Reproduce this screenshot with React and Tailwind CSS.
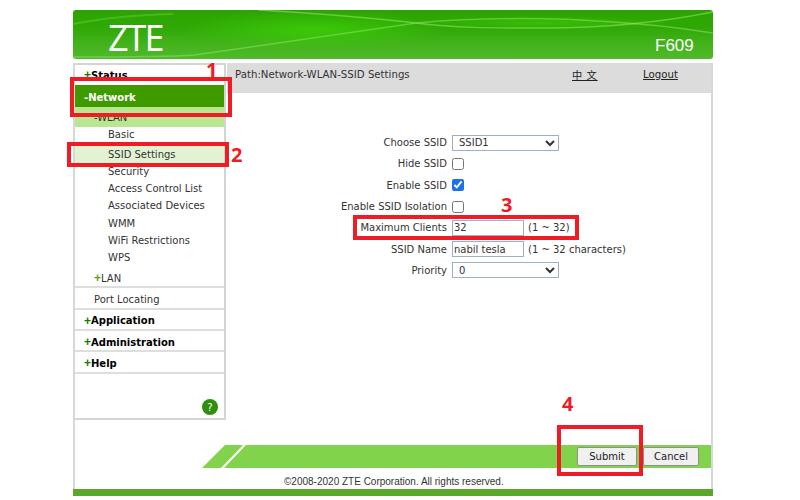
import { useState } from 'react';

const subItems = ['Security', 'Access Control List', 'Associated Devices', 'WMM', 'WiFi Restrictions', 'WPS'];

function Plus({ className }) {
    return <span className={`inline-block w-[7px] leading-none font-bold font-['Liberation_Sans',sans-serif] ${className}`}>+</span>;
}

function TopItem({ label }) {
    return (
        <div className="h-[21.4px] pl-[9px] pt-[3px] flex items-center border-b-2 border-[#dedede] font-bold text-[10px] text-black">
            <Plus className="text-[#0a7d0a] text-[12px]" />{label}
        </div>
    );
}

function SideMenu() {
    return (
        <aside className="w-[151px] h-[357px] flex flex-col border-t-2 border-r-2 border-b-2 border-[#d4d4d4] shrink-0">
            <div className="h-[20px] pl-[9px] flex items-center font-bold text-[10px] text-black">
                <Plus className="text-[#0a7d0a] text-[12px]" />Status
            </div>
            <div className="h-[22px] pl-[9px] pt-[3px] flex items-center bg-[#3f9a00] text-white font-bold text-[10px]">-Network</div>
            <div className="h-[20px] pl-[19px] flex items-center bg-[#b9e690] text-[10px] text-[#333]">-WLAN</div>
            <div className="h-[18px] pl-[33px] pb-[3px] flex items-center text-[10px] text-[#333]">Basic</div>
            <div className="h-[18px] pl-[33px] flex items-center bg-[#e2f3d3] text-[10px] text-[#333]">SSID Settings</div>
            {subItems.map((item) => (
                <div key={item} className="h-[17.2px] pl-[33px] flex items-center text-[10px] text-[#333]">{item}</div>
            ))}
            <div className="h-[22px] pl-[19px] pt-[4px] flex items-center border-b-2 border-[#dedede] text-[10px] text-[#333]">
                <Plus className="text-[#5f9e1e] text-[12px]" />LAN
            </div>
            <div className="h-[21.4px] pl-[19px] pt-[3px] flex items-center border-b-2 border-[#dedede] text-[10px] text-[#333]">Port Locating</div>
            <TopItem label="Application" />
            <TopItem label="Administration" />
            <TopItem label="Help" />
            <div className="flex-1 flex items-end justify-end pr-[6px] pb-[3px]">
                <div className="w-[16px] h-[16px] rounded-full bg-[#2f8f0c] text-white text-[10px] flex items-center justify-center">?</div>
            </div>
        </aside>
    );
}

function FormRow({ label, children }) {
    return (
        <div className="h-[21.3px] flex items-center">
            <div className="w-[225px] pr-[5px] text-right text-[10px] text-[#333]">{label}</div>
            {children}
        </div>
    );
}

function RedBox({ className }) {
    return <div className={`absolute border-[4px] border-[#ee1c25] pointer-events-none ${className}`} />;
}

function RedNum({ className, children }) {
    return <div className={`absolute font-['Open_Sans',sans-serif] font-bold text-[20px] leading-none text-[#ee1c25] ${className}`}>{children}</div>;
}

export default function App() {
    const [enabled, setEnabled] = useState(true);

    return (
        <div className="relative w-[800px] h-[500px] bg-white pt-[10px] pl-[73px] overflow-hidden font-['DejaVu_Sans',sans-serif]">
            <div className="w-[640px] flex flex-col">
                {/* Bandeau ZTE */}
                <header className="relative h-[49px] rounded-[3px] bg-[linear-gradient(180deg,#2ca400_0%,#2fa806_35%,#43b31c_70%,#4fba2a_100%)]">
                    <svg viewBox="0 0 640 49" className="absolute inset-0 w-full h-full rounded-[3px]" fill="none">
                        <defs>
                            <radialGradient id="glow">
                                <stop offset="0%" stopColor="#3ccc08" stopOpacity="0.9" />
                                <stop offset="100%" stopColor="#3ccc08" stopOpacity="0" />
                            </radialGradient>
                        </defs>
                        {/* zone claire le long des courbes */}
                        <ellipse cx="240" cy="20" rx="130" ry="20" fill="url(#glow)" />
                        <ellipse cx="470" cy="13" rx="130" ry="7" fill="url(#glow)" fillOpacity="0.7" />
                        <path d="M1 47 C60 47 90 47 122 45 C205 33 290 20 343 13 C400 8 470 7 540 12 C590 15 620 20 640 23" stroke="#8fe868" strokeOpacity="0.5" strokeWidth="1.5" />
                        <path d="M185 0 C240 3 290 7 343 13 C380 18 420 18 470 18 C530 18 590 12 640 2" stroke="#8fe868" strokeOpacity="0.55" strokeWidth="1.5" />
                        <path d="M0 14 C30 8 60 5 100 4" stroke="#6fd848" strokeOpacity="0.4" strokeWidth="2" />
                    </svg>
                    <span className="absolute left-[35px] top-[8px] font-['Open_Sans',sans-serif] font-medium tracking-[-2px] text-white text-[36px] leading-[40px]">ZTE</span>
                    <span className="absolute left-[582px] top-[26px] font-['Liberation_Sans',sans-serif] text-white text-[17px] leading-[20px]">F609</span>
                </header>

                <div className="mt-[4px] h-[426px] flex border-l-2 border-r-2 border-[#d8d8d8]">
                    <SideMenu />
                    <main className="flex-1 flex flex-col ml-[1px]">
                        <div className="h-[30px] shrink-0 bg-[#dcdcdc] flex pt-[4px] text-[10.2px] text-[#333]">
                            <span className="ml-[8px] w-[337px]">Path:Network-WLAN-SSID Settings</span>
                            <a className="w-[71px] underline text-[#222] tracking-[1px] font-['Noto_Sans_CJK_SC',sans-serif]">中 文</a>
                            <a className="underline text-[#222]">Logout</a>
                        </div>

                        <form className="pt-[39px] flex flex-col">
                            <FormRow label="Choose SSID">
                                <select className="w-[107px] h-[16px] border border-[#9db0c4] text-[10px] bg-white pl-[2px] text-[#333]" defaultValue="SSID1">
                                    <option>SSID1</option>
                                </select>
                            </FormRow>
                            <FormRow label="Hide SSID"><input type="checkbox" className="w-[12px] h-[12px]" /></FormRow>
                            <FormRow label="Enable SSID">
                                <input type="checkbox" className="w-[12px] h-[12px] accent-[#1a73e8]" checked={enabled} onChange={() => setEnabled(!enabled)} />
                            </FormRow>
                            <FormRow label="Enable SSID Isolation"><input type="checkbox" className="w-[12px] h-[12px]" /></FormRow>
                            <FormRow label="Maximum Clients">
                                <input className="w-[72px] h-[16px] border border-[#9db0c4] text-[10px] px-[1px] text-[#333]" defaultValue="32" />
                                <span className="ml-[4px] text-[10px] text-[#333]">(1 ~ 32)</span>
                            </FormRow>
                            <FormRow label="SSID Name">
                                <input className="w-[72px] h-[16px] border border-[#9db0c4] text-[10px] px-[1px] text-[#333]" defaultValue="nabil tesla" />
                                <span className="ml-[4px] text-[10px] text-[#333]">(1 ~ 32 characters)</span>
                            </FormRow>
                            <FormRow label="Priority">
                                <select className="w-[107px] h-[16px] border border-[#9db0c4] text-[10px] bg-white pl-[2px] text-[#333]" defaultValue="0">
                                    <option>0</option>
                                </select>
                            </FormRow>
                        </form>

                        <div className="mt-auto relative h-[23px] flex justify-end items-center gap-[6px] pr-[12px] mb-[21px]">
                            <svg viewBox="0 0 509 23" className="absolute left-[-25px] top-0 w-[509px] h-[23px]">
                                <polygon points="0,23 23,0 41,0 19,23" fill="#80d34a" />
                                <polygon points="22,23 44,0 509,0 509,23" fill="#80d34a" />
                            </svg>
                            <button type="button" className="relative w-[60px] h-[19px] bg-[#f0f0f0] border border-[#8f8f8f] rounded-[2px] text-[10px] text-[#222]">Submit</button>
                            <button type="button" className="relative w-[56px] h-[19px] bg-[#f0f0f0] border border-[#8f8f8f] rounded-[2px] text-[10px] text-[#222]">Cancel</button>
                        </div>
                    </main>
                </div>
                <div className="h-[7px] bg-[#5aa82a]" />
            </div>

            <div className="absolute left-[284px] top-[475px] font-['Liberation_Sans',sans-serif] text-[10px] leading-[13px] text-[#333] whitespace-nowrap">©2008-2020 ZTE Corporation. All rights reserved.</div>

            {/* Annotations rouges */}
            <RedBox className="left-[70px] top-[77px] w-[162px] h-[40px]" />
            <RedBox className="left-[67px] top-[142px] w-[162px] h-[25px]" />
            <RedBox className="left-[353px] top-[215px] w-[226px] h-[25px]" />
            <RedBox className="left-[557px] top-[425px] w-[86px] h-[51px]" />
            <RedNum className="left-[206px] top-[60px]">1</RedNum>
            <RedNum className="left-[231px] top-[145px]">2</RedNum>
            <RedNum className="left-[501px] top-[195px]">3</RedNum>
            <RedNum className="left-[562px] top-[394px]">4</RedNum>
        </div>
    );
}
